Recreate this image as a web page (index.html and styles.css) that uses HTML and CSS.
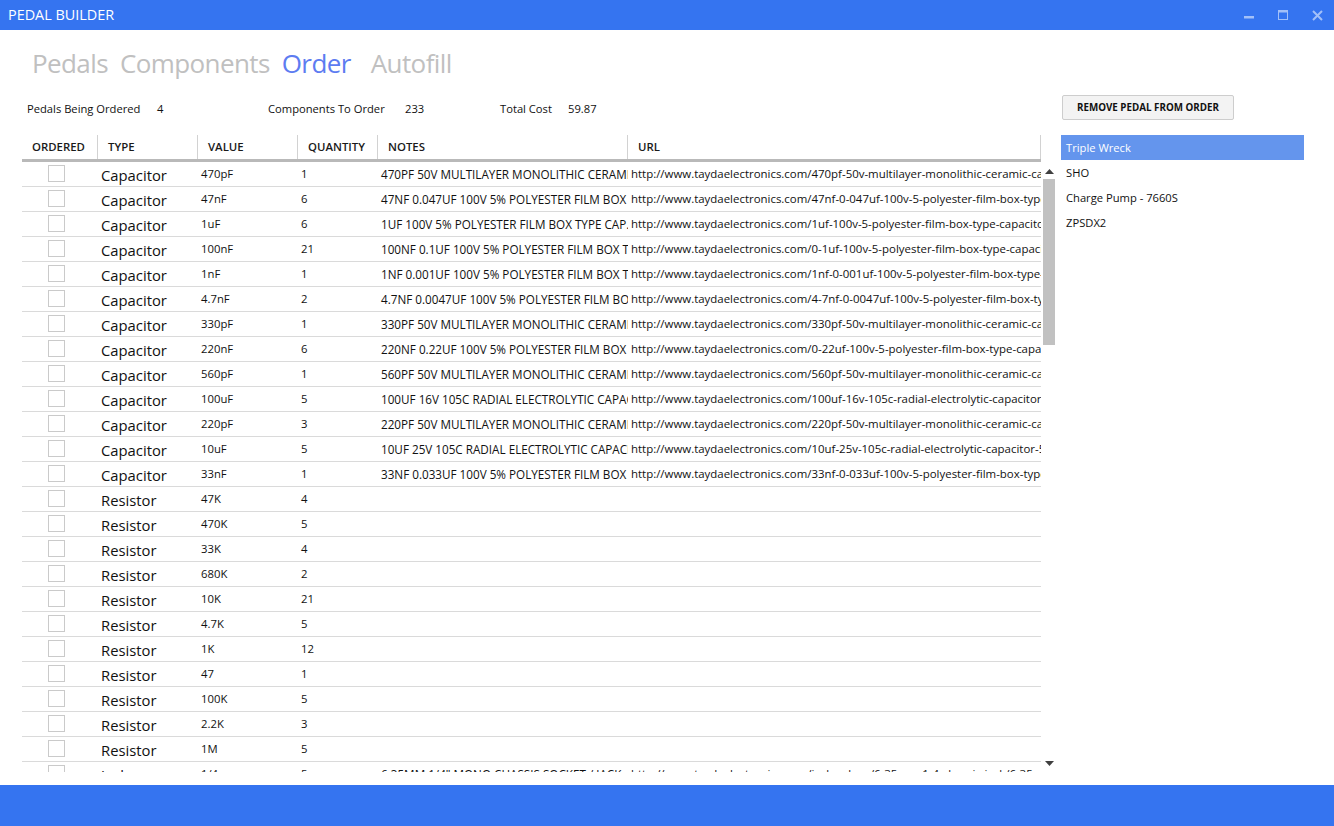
FILE: index.html
```html
<!DOCTYPE html>
<html>
<head>
<meta charset="utf-8">
<title>Pedal Builder</title>
<link rel="stylesheet" href="styles.css">
</head>
<body>
<div class="titlebar">
  <div class="title">PEDAL BUILDER</div>
  <div class="winctl">
    <div class="winbtn"><svg width="10" height="10" viewBox="0 0 10 10"><rect x="0" y="6" width="10" height="2.5" fill="#a3c0f8"/></svg></div>
    <div class="winbtn"><svg width="10" height="10" viewBox="0 0 10 10"><rect x="0.5" y="0.5" width="9" height="9" fill="none" stroke="#a3c0f8" stroke-width="1"/><rect x="0" y="0" width="10" height="2.5" fill="#a3c0f8"/></svg></div>
    <div class="winbtn"><svg width="11" height="11" viewBox="0 0 11 11"><path d="M1 1 L10 10 M10 1 L1 10" stroke="#a3c0f8" stroke-width="2"/></svg></div>
  </div>
</div>

<div class="main">
  <div class="left">
    <div class="nav">
      <span class="tab">Pedals</span>
      <span class="tab">Components</span>
      <span class="tab active">Order</span>
      <span class="tab">Autofill</span>
    </div>

    <div class="stats">
      <div class="stat stat1"><span class="label">Pedals Being Ordered</span><span>4</span></div>
      <div class="stat stat2"><span class="label">Components To Order</span><span>233</span></div>
      <div class="stat stat3"><span class="label">Total Cost</span><span>59.87</span></div>
    </div>

    <div class="table">
      <div class="thead">
        <div class="th c-ord">ORDERED</div>
        <div class="th c-type">TYPE</div>
        <div class="th c-val">VALUE</div>
        <div class="th c-qty">QUANTITY</div>
        <div class="th c-notes">NOTES</div>
        <div class="th c-url">URL</div>
      </div>
      <div class="tbody">
        <div class="rows">
          <div class="row"><div class="c c-ord"><span class="cb"></span></div><div class="c c-type">Capacitor</div><div class="c c-val">470pF</div><div class="c c-qty">1</div><div class="c c-notes">470PF 50V MULTILAYER MONOLITHIC CERAMIC CAPACITOR</div><div class="c c-url">http://www.taydaelectronics.com/470pf-50v-multilayer-monolithic-ceramic-capacitor.html</div></div>
          <div class="row"><div class="c c-ord"><span class="cb"></span></div><div class="c c-type">Capacitor</div><div class="c c-val">47nF</div><div class="c c-qty">6</div><div class="c c-notes">47NF 0.047UF 100V 5% POLYESTER FILM BOX TYPE CAPACITOR</div><div class="c c-url">http://www.taydaelectronics.com/47nf-0-047uf-100v-5-polyester-film-box-type-capacitor.html</div></div>
          <div class="row"><div class="c c-ord"><span class="cb"></span></div><div class="c c-type">Capacitor</div><div class="c c-val">1uF</div><div class="c c-qty">6</div><div class="c c-notes">1UF 100V 5% POLYESTER FILM BOX TYPE CAP. MKT</div><div class="c c-url">http://www.taydaelectronics.com/1uf-100v-5-polyester-film-box-type-capacitor.html</div></div>
          <div class="row"><div class="c c-ord"><span class="cb"></span></div><div class="c c-type">Capacitor</div><div class="c c-val">100nF</div><div class="c c-qty">21</div><div class="c c-notes">100NF 0.1UF 100V 5% POLYESTER FILM BOX TYPE CAPACITOR</div><div class="c c-url">http://www.taydaelectronics.com/0-1uf-100v-5-polyester-film-box-type-capacitor.html</div></div>
          <div class="row"><div class="c c-ord"><span class="cb"></span></div><div class="c c-type">Capacitor</div><div class="c c-val">1nF</div><div class="c c-qty">1</div><div class="c c-notes">1NF 0.001UF 100V 5% POLYESTER FILM BOX TYPE CAPACITOR</div><div class="c c-url">http://www.taydaelectronics.com/1nf-0-001uf-100v-5-polyester-film-box-type-capacitor.html</div></div>
          <div class="row"><div class="c c-ord"><span class="cb"></span></div><div class="c c-type">Capacitor</div><div class="c c-val">4.7nF</div><div class="c c-qty">2</div><div class="c c-notes">4.7NF 0.0047UF 100V 5% POLYESTER FILM BOX TYPE CAPACITOR</div><div class="c c-url">http://www.taydaelectronics.com/4-7nf-0-0047uf-100v-5-polyester-film-box-type-capacitor.html</div></div>
          <div class="row"><div class="c c-ord"><span class="cb"></span></div><div class="c c-type">Capacitor</div><div class="c c-val">330pF</div><div class="c c-qty">1</div><div class="c c-notes">330PF 50V MULTILAYER MONOLITHIC CERAMIC CAPACITOR</div><div class="c c-url">http://www.taydaelectronics.com/330pf-50v-multilayer-monolithic-ceramic-capacitor.html</div></div>
          <div class="row"><div class="c c-ord"><span class="cb"></span></div><div class="c c-type">Capacitor</div><div class="c c-val">220nF</div><div class="c c-qty">6</div><div class="c c-notes">220NF 0.22UF 100V 5% POLYESTER FILM BOX TYPE CAPACITOR</div><div class="c c-url">http://www.taydaelectronics.com/0-22uf-100v-5-polyester-film-box-type-capacitor.html</div></div>
          <div class="row"><div class="c c-ord"><span class="cb"></span></div><div class="c c-type">Capacitor</div><div class="c c-val">560pF</div><div class="c c-qty">1</div><div class="c c-notes">560PF 50V MULTILAYER MONOLITHIC CERAMIC CAPACITOR</div><div class="c c-url">http://www.taydaelectronics.com/560pf-50v-multilayer-monolithic-ceramic-capacitor.html</div></div>
          <div class="row"><div class="c c-ord"><span class="cb"></span></div><div class="c c-type">Capacitor</div><div class="c c-val">100uF</div><div class="c c-qty">5</div><div class="c c-notes">100UF 16V 105C RADIAL ELECTROLYTIC CAPACITOR 6X11MM</div><div class="c c-url">http://www.taydaelectronics.com/100uf-16v-105c-radial-electrolytic-capacitor-6x11mm.html</div></div>
          <div class="row"><div class="c c-ord"><span class="cb"></span></div><div class="c c-type">Capacitor</div><div class="c c-val">220pF</div><div class="c c-qty">3</div><div class="c c-notes">220PF 50V MULTILAYER MONOLITHIC CERAMIC CAPACITOR</div><div class="c c-url">http://www.taydaelectronics.com/220pf-50v-multilayer-monolithic-ceramic-capacitor.html</div></div>
          <div class="row"><div class="c c-ord"><span class="cb"></span></div><div class="c c-type">Capacitor</div><div class="c c-val">10uF</div><div class="c c-qty">5</div><div class="c c-notes">10UF 25V 105C RADIAL ELECTROLYTIC CAPACITOR 5X11MM</div><div class="c c-url">http://www.taydaelectronics.com/10uf-25v-105c-radial-electrolytic-capacitor-5x11mm.html</div></div>
          <div class="row"><div class="c c-ord"><span class="cb"></span></div><div class="c c-type">Capacitor</div><div class="c c-val">33nF</div><div class="c c-qty">1</div><div class="c c-notes">33NF 0.033UF 100V 5% POLYESTER FILM BOX TYPE CAPACITOR</div><div class="c c-url">http://www.taydaelectronics.com/33nf-0-033uf-100v-5-polyester-film-box-type-capacitor.html</div></div>
          <div class="row"><div class="c c-ord"><span class="cb"></span></div><div class="c c-type">Resistor</div><div class="c c-val">47K</div><div class="c c-qty">4</div><div class="c c-notes"></div><div class="c c-url"></div></div>
          <div class="row"><div class="c c-ord"><span class="cb"></span></div><div class="c c-type">Resistor</div><div class="c c-val">470K</div><div class="c c-qty">5</div><div class="c c-notes"></div><div class="c c-url"></div></div>
          <div class="row"><div class="c c-ord"><span class="cb"></span></div><div class="c c-type">Resistor</div><div class="c c-val">33K</div><div class="c c-qty">4</div><div class="c c-notes"></div><div class="c c-url"></div></div>
          <div class="row"><div class="c c-ord"><span class="cb"></span></div><div class="c c-type">Resistor</div><div class="c c-val">680K</div><div class="c c-qty">2</div><div class="c c-notes"></div><div class="c c-url"></div></div>
          <div class="row"><div class="c c-ord"><span class="cb"></span></div><div class="c c-type">Resistor</div><div class="c c-val">10K</div><div class="c c-qty">21</div><div class="c c-notes"></div><div class="c c-url"></div></div>
          <div class="row"><div class="c c-ord"><span class="cb"></span></div><div class="c c-type">Resistor</div><div class="c c-val">4.7K</div><div class="c c-qty">5</div><div class="c c-notes"></div><div class="c c-url"></div></div>
          <div class="row"><div class="c c-ord"><span class="cb"></span></div><div class="c c-type">Resistor</div><div class="c c-val">1K</div><div class="c c-qty">12</div><div class="c c-notes"></div><div class="c c-url"></div></div>
          <div class="row"><div class="c c-ord"><span class="cb"></span></div><div class="c c-type">Resistor</div><div class="c c-val">47</div><div class="c c-qty">1</div><div class="c c-notes"></div><div class="c c-url"></div></div>
          <div class="row"><div class="c c-ord"><span class="cb"></span></div><div class="c c-type">Resistor</div><div class="c c-val">100K</div><div class="c c-qty">5</div><div class="c c-notes"></div><div class="c c-url"></div></div>
          <div class="row"><div class="c c-ord"><span class="cb"></span></div><div class="c c-type">Resistor</div><div class="c c-val">2.2K</div><div class="c c-qty">3</div><div class="c c-notes"></div><div class="c c-url"></div></div>
          <div class="row"><div class="c c-ord"><span class="cb"></span></div><div class="c c-type">Resistor</div><div class="c c-val">1M</div><div class="c c-qty">5</div><div class="c c-notes"></div><div class="c c-url"></div></div>
          <div class="row"><div class="c c-ord"><span class="cb"></span></div><div class="c c-type">Jack</div><div class="c c-val">1/4</div><div class="c c-qty">5</div><div class="c c-notes">6.35MM 1/4" MONO CHASSIS SOCKET / JACK</div><div class="c c-url">http://www.taydaelectronics.com/jacks-plugs/6-35mm-1-4-chassis-jack/6-35mm-1-4-mono-chassis-socket-jack.html</div></div>
        </div>
        <div class="scrollbar">
          <div class="sb-arrow sb-up"><svg width="9" height="5" viewBox="0 0 9 5"><path d="M0 5 L4.5 0 L9 5 Z" fill="#404040"/></svg></div>
          <div class="sb-thumb"></div>
          <div class="sb-track"></div>
          <div class="sb-arrow sb-down"><svg width="9" height="5" viewBox="0 0 9 5"><path d="M0 0 L9 0 L4.5 5 Z" fill="#404040"/></svg></div>
        </div>
      </div>
    </div>
  </div>

  <div class="right">
    <div class="btn">REMOVE PEDAL FROM ORDER</div>
    <div class="list">
      <div class="item sel">Triple Wreck</div>
      <div class="item">SHO</div>
      <div class="item">Charge Pump - 7660S</div>
      <div class="item">ZPSDX2</div>
    </div>
  </div>
</div>

<div class="footer"></div>
</body>
</html>
```

FILE: styles.css
```css
* { box-sizing: border-box; }
html, body { margin: 0; padding: 0; }
body {
  width: 1334px;
  height: 826px;
  overflow: hidden;
  font-family: "Open Sans", "Noto Sans", sans-serif;
  color: #111;
  background: #fff;
  display: flex;
  flex-direction: column;
}

.titlebar {
  height: 30px;
  flex: none;
  background: #3574f0;
  display: flex;
  align-items: center;
  color: #fff;
}
.title { font-size: 14.4px; line-height: 30px; padding-left: 8px; }
.winctl { margin-left: auto; display: flex; }
.winbtn { width: 34px; height: 30px; display: flex; align-items: center; justify-content: center; }

.main { flex: 1; display: flex; padding-left: 22px; min-height: 0; }
.left { width: 1033px; display: flex; flex-direction: column; }

.nav {
  margin-top: 16px;
  padding-left: 10px;
  height: 34px;
  display: flex;
  font-size: 26px;
  line-height: 34px;
  letter-spacing: -0.6px;
  color: #c0c0c0;
}
.tab { margin-right: 12px; }
.tab.active { color: #5d7cf1; margin-right: 20px; }

.stats {
  margin-top: 21px;
  height: 16px;
  display: flex;
  padding-left: 5px;
  font-size: 11.2px;
  line-height: 16px;
}
.stat { display: flex; }
.stat1 { width: 241px; }
.stat2 { width: 232px; }
.stat1 .label { width: 130px; }
.stat2 .label { width: 137px; }
.stat3 .label { width: 68px; }

.table { margin-top: 18px; width: 1033px; }
.thead {
  display: flex;
  width: 1019px;
  height: 27px;
  border-bottom: 3px solid #b9b9b9;
}
.th {
  height: 24px;
  border-right: 1px solid #d2d2d2;
  padding-left: 10px;
  font-size: 11.4px;
  font-weight: 600;
  line-height: 24px;
  color: #1a1a1a;
  white-space: nowrap;
  overflow: hidden;
}
.c-ord { width: 76px; flex: none; }
.c-type { width: 100px; flex: none; }
.c-val { width: 100px; flex: none; }
.c-qty { width: 80px; flex: none; }
.c-notes { width: 250px; flex: none; }
.c-url { width: 413px; flex: none; }

.tbody { display: flex; height: 610px; overflow: hidden; }
.rows { width: 1019px; flex: none; overflow: hidden; }
.row {
  display: flex;
  height: 25px;
  border-bottom: 1px solid #dadada;
}
.c {
  height: 24px;
  padding: 0 3px;
  font-size: 11.3px;
  line-height: 24px;
  white-space: nowrap;
  overflow: hidden;
}
.c.c-notes { font-size: 11.7px; }
.c.c-url { font-size: 11.45px; }
.c.c-ord { padding: 3px 0 0 26px; }
.c.c-type { font-size: 14.8px; padding-top: 1px; }
.cb {
  display: block;
  width: 17px;
  height: 17px;
  border: 1px solid #cacaca;
  background: #fff;
}

.scrollbar { width: 14px; flex: none; display: flex; flex-direction: column; }
.sb-arrow { height: 17px; display: flex; justify-content: center; padding-left: 2px; }
.sb-up { align-items: flex-start; padding-top: 7px; }
.sb-down { align-items: flex-start; padding-top: 6px; }
.sb-thumb { height: 166px; margin-left: 2px; width: 12px; background: #c1c1c1; }
.sb-track { flex: 1; }

.right { margin-left: 6px; width: 243px; padding-top: 65px; }
.btn {
  margin-left: 1px;
  width: 172px;
  height: 25px;
  background: #f3f3f3;
  border: 1px solid #cdcdcd;
  border-radius: 2px;
  font-size: 9.8px;
  font-weight: 700;
  color: #111;
  display: flex;
  align-items: center;
  justify-content: center;
  white-space: nowrap;
}
.list { margin-top: 15px; }
.item { height: 25px; line-height: 25px; padding-left: 5px; font-size: 11.2px; }
.item.sel { background: #6495ed; color: #fff; }

.footer { height: 41px; flex: none; background: #3574f0; }
```
